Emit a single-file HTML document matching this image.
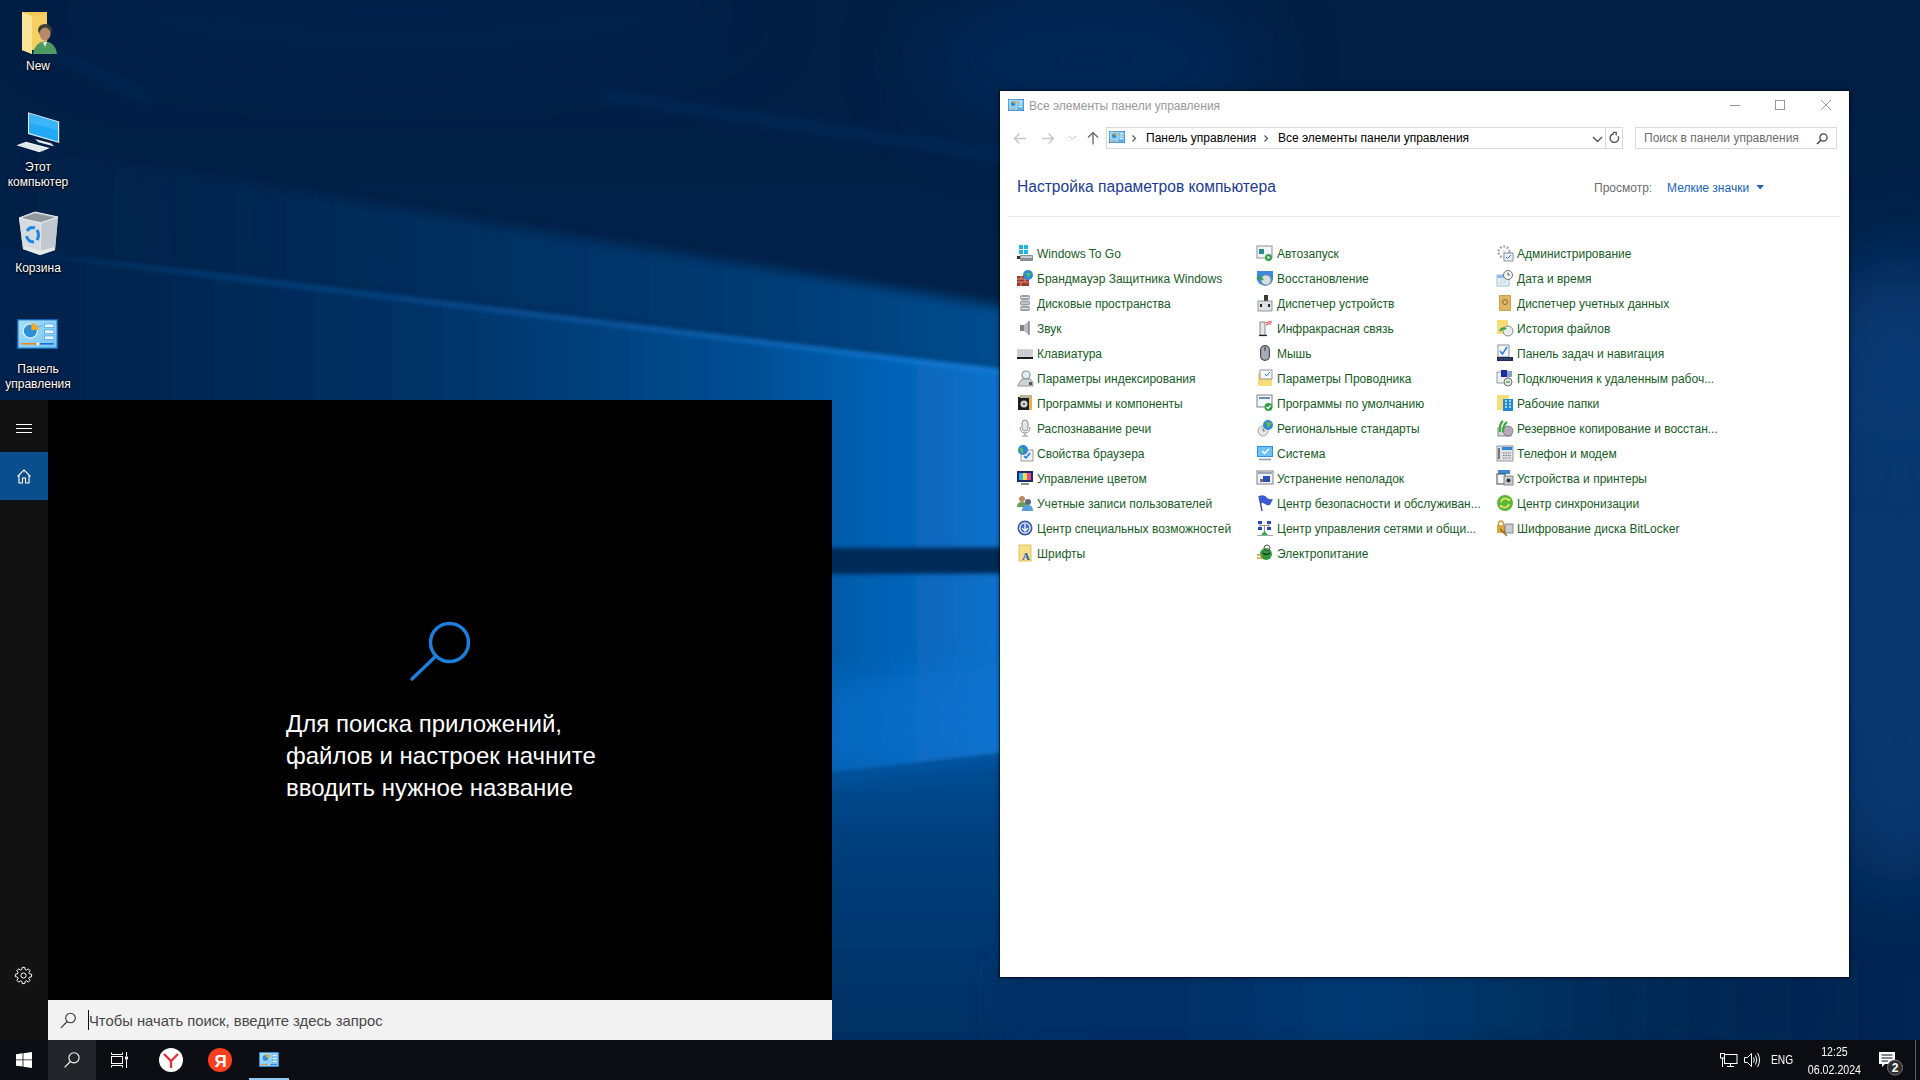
<!DOCTYPE html>
<html><head><meta charset="utf-8"><style>
*{margin:0;padding:0;box-sizing:border-box}
html,body{width:1920px;height:1080px;overflow:hidden;background:#011d40;font-family:"Liberation Sans",sans-serif}
.a{position:absolute}
svg.a{overflow:visible}
#wall{position:absolute;left:0;top:0;width:1920px;height:1040px}
.dl{position:absolute;width:76px;left:0;text-align:center;color:#fff;font-size:12px;line-height:15px;text-shadow:0 0 2px #000,0 1px 2px #000}
#sp{position:absolute;left:0;top:400px;width:832px;height:640px;background:#000;overflow:hidden}
#side{position:absolute;left:0;top:0;width:48px;height:640px;background:#121212}
#taskbar{position:absolute;left:0;top:1040px;width:1920px;height:40px;background:#0b0d12}
#win{position:absolute;left:1000px;top:91px;width:849px;height:886px;background:#fff;box-shadow:0 0 0 1px rgba(0,10,30,.55),0 0 4px 1px rgba(0,0,0,.45)}
.t{position:absolute;white-space:nowrap}
.it{position:absolute;font-size:12px;color:#175c26;white-space:nowrap;line-height:16px}
</style></head><body>
<svg width="0" height="0" style="position:absolute"><defs>
<linearGradient id="cpg" x1="0" y1="0" x2="1" y2="1"><stop offset="0" stop-color="#b8e8ff" stop-opacity=".6"/><stop offset="1" stop-color="#5cb8f0" stop-opacity=".5"/></linearGradient>
</defs></svg>
<svg id="wall" width="1920" height="1040" viewBox="0 0 1920 1040">
 <defs>
  <filter id="b2" x="-20%" y="-20%" width="140%" height="140%"><feGaussianBlur stdDeviation="2"/></filter>
  <filter id="b6" x="-20%" y="-20%" width="140%" height="140%"><feGaussianBlur stdDeviation="6"/></filter>
  <filter id="b15" x="-20%" y="-20%" width="140%" height="140%"><feGaussianBlur stdDeviation="15"/></filter>
  <filter id="b40" x="-50%" y="-50%" width="200%" height="200%"><feGaussianBlur stdDeviation="40"/></filter>
  <linearGradient id="g0" x1="0" y1="0" x2="0" y2="1">
   <stop offset="0" stop-color="#011e43"/><stop offset="0.4" stop-color="#01234b"/><stop offset="1" stop-color="#012654"/>
  </linearGradient>
  <linearGradient id="gA" gradientUnits="userSpaceOnUse" x1="0" y1="0" x2="1000" y2="0">
   <stop offset="0" stop-color="#022550" stop-opacity="0"/><stop offset="0.35" stop-color="#022c5a" stop-opacity="0.9"/><stop offset="0.7" stop-color="#03386f"/><stop offset="1" stop-color="#064c8e"/>
  </linearGradient>
  <linearGradient id="gB" gradientUnits="userSpaceOnUse" x1="0" y1="0" x2="1000" y2="0">
   <stop offset="0" stop-color="#01234d"/><stop offset="0.15" stop-color="#022650"/><stop offset="0.4" stop-color="#033063"/><stop offset="0.6" stop-color="#03417d"/><stop offset="0.75" stop-color="#044e94"/><stop offset="0.9" stop-color="#0664b8"/><stop offset="1" stop-color="#0a72cc"/>
  </linearGradient>
  <linearGradient id="gE" gradientUnits="userSpaceOnUse" x1="0" y1="0" x2="1000" y2="0">
   <stop offset="0" stop-color="#1580e0" stop-opacity="0"/><stop offset="0.2" stop-color="#1580e0" stop-opacity="0.2"/><stop offset="0.6" stop-color="#1580e0" stop-opacity="0.35"/><stop offset="1" stop-color="#1a88e8" stop-opacity="0.6"/>
  </linearGradient>
  <linearGradient id="gD" x1="0" y1="0" x2="1" y2="0">
   <stop offset="0" stop-color="#032f66"/><stop offset="0.2" stop-color="#032f66"/><stop offset="0.4" stop-color="#043a74"/><stop offset="0.6" stop-color="#03305f"/><stop offset="1" stop-color="#022248" stop-opacity="0"/>
  </linearGradient>
  <linearGradient id="gC" x1="0" y1="0" x2="0" y2="1">
   <stop offset="0" stop-color="#004f98"/><stop offset="0.3" stop-color="#003f7c"/><stop offset="1" stop-color="#022a5a"/>
  </linearGradient>
 </defs>
 <rect width="1920" height="1040" fill="url(#g0)"/>
 <ellipse cx="1090" cy="60" rx="170" ry="70" fill="#03306a" opacity="0.5" filter="url(#b40)"/>
 <ellipse cx="400" cy="10" rx="350" ry="60" fill="#02285a" opacity="0.35" filter="url(#b40)"/>
 <ellipse cx="1900" cy="570" rx="110" ry="320" fill="#0a4585" opacity="0.6" filter="url(#b40)"/>
 <ellipse cx="1900" cy="360" rx="90" ry="80" fill="#0a4585" opacity="0.3" filter="url(#b40)"/>
 <polygon points="600,90 1010,152 1010,162 600,100" fill="#033a74" opacity="0.35" filter="url(#b6)"/>
 <polygon points="50,45 150,95 150,105 50,55" fill="#033a74" opacity="0.3" filter="url(#b6)"/>
 <polygon points="-100,128 1100,322 1100,385 -100,233" fill="url(#gA)" filter="url(#b6)"/>
 <polygon points="-100,885 1100,742 1100,1100 -100,1100" fill="url(#gC)" filter="url(#b2)"/>
 <rect x="1000" y="960" width="900" height="90" fill="url(#gD)" filter="url(#b15)"/>
 <polygon points="-100,236 1100,382 1100,742 -100,885" fill="url(#gB)" filter="url(#b2)"/>
 <polygon points="-100,234 1100,380 1100,386 -100,240" fill="url(#gE)" filter="url(#b2)"/>
 <polygon points="600,549 1100,547 1100,573 600,575" fill="#002b58" filter="url(#b2)"/>
 <polygon points="700,690 1100,660 1100,742 700,790" fill="#0a76d6" opacity="0.45" filter="url(#b15)"/>
</svg>
<svg class="a" style="left:20px;top:10px" width="40" height="46" viewBox="0 0 40 46">
 <path d="M2 2 L27 2 L27 40 L12 40 L12 44 L2 40 Z" fill="#f3c94f"/>
 <path d="M2 2 L12 6 L12 44 L2 40 Z" fill="#fbe39a"/>
 <path d="M12 6 L27 2 L27 40 L12 40 Z" fill="#f5cf62"/>
 <ellipse cx="25" cy="20" rx="7" ry="6" fill="#3d3d3a"/>
 <ellipse cx="25" cy="24" rx="5.5" ry="6.5" fill="#b9896a"/>
 <path d="M13 44 Q14 33 25 31 Q36 33 37 44 Z" fill="#4f9a63"/>
 <path d="M23 32 L25 37 L27 32 Z" fill="#e8f0ea"/>
</svg>
<div class="dl" style="top:59px">New</div>
<svg class="a" style="left:14px;top:110px" width="48" height="46" viewBox="0 0 48 46">
 <path d="M14 2.2 L45.2 11.5 L45.2 33 L14 24 Z" fill="#dfeaf2"/>
 <path d="M15 3.6 L44 12.3 L44 31.4 L15 22.9 Z" fill="#22aaf6"/>
 <path d="M15 3.6 L44 12.3 L44 20 L15 13 Z" fill="#4cbcf6" opacity=".6"/>
 <path d="M21 29 L37 33.3 L40.5 36.5 L24.5 32.2 Z" fill="#e8eef2"/>
 <path d="M2.4 35.2 L12 31.8 L35.8 38 L25.4 42.2 Z" fill="#eef2f5"/>
 <path d="M6 35 L30 41 M9 33.5 L33 39.5" stroke="#b9c6cf" stroke-width=".5"/>
</svg>
<div class="dl" style="top:160px">Этот<br>компьютер</div>
<svg class="a" style="left:18px;top:210px" width="42" height="46" viewBox="0 0 42 46">
 <path d="M1 8 L17 2 L40 7 L37 40 L22 45 L5 39 Z" fill="#b9c0c6"/>
 <path d="M1 8 L23 13 L22 45 L5 39 Z" fill="#d6dbdf"/>
 <path d="M23 13 L40 7 L37 40 L22 45 Z" fill="#c2c8cd"/>
 <path d="M3 8.3 L17 3.5 L37.5 7.6 L23 12 Z" fill="#8f979d"/>
 <path d="M1 8 L17 2 L40 7 L23 13 Z" fill="none" stroke="#eef1f3" stroke-width="1"/>
 <path d="M23 13 L22 45" stroke="#eef1f3" stroke-width=".8"/>
 <path d="M7 36 L22 41 L36 37 L37 40 L22 45 L5 39 Z" fill="#e6e9ec"/>
 <path d="M9 21 Q12 16 17 18" stroke="#1a86e6" stroke-width="3" fill="none"/>
 <path d="M19 20 Q22 25 19 30" stroke="#1a86e6" stroke-width="3" fill="none"/>
 <path d="M16 32 Q10 32 8.5 26" stroke="#1a86e6" stroke-width="3" fill="none"/>
</svg>
<div class="dl" style="top:261px">Корзина</div>
<svg class="a" style="left:17px;top:319px" width="41" height="30" viewBox="0 0 40 30" preserveAspectRatio="none">
 <rect x="0" y="0" width="40" height="30" fill="#0b64b4"/>
 <rect x="1.5" y="1.5" width="37" height="27" fill="#8fd3f7"/>
 <rect x="1.5" y="1.5" width="37" height="27" fill="url(#cpg)"/>
 <circle cx="13" cy="12" r="7" fill="#2f8fd8" stroke="#e8f7ff" stroke-width="1.2"/>
 <path d="M14 4 L14 11 L21 11 A7 7 0 0 0 14 4 Z" fill="#f5a623"/>
 <rect x="27" y="5" width="9" height="3.5" fill="#e8f7ff" stroke="#3b8fd0" stroke-width=".6"/>
 <rect x="27" y="11" width="9" height="3.5" fill="#e8f7ff" stroke="#3b8fd0" stroke-width=".6"/>
 <rect x="27" y="17" width="9" height="3.5" fill="#e8f7ff" stroke="#3b8fd0" stroke-width=".6"/>
 <path d="M20 8 L25 6.5" stroke="#3b8fd0" stroke-width=".6"/>
 <rect x="4" y="24" width="16" height="1.6" fill="#f08a1c"/>
 <rect x="21" y="24" width="15" height="1.6" fill="#1e6fd0"/>
 <circle cx="20.5" cy="24.8" r="1.6" fill="#e8f7ff"/>
</svg>
<div class="dl" style="top:362px">Панель<br>управления</div>
<div id="sp"><div id="side">
<div class="a" style="left:16px;top:24px;width:16px;height:1px;background:#fff"></div>
<div class="a" style="left:16px;top:28px;width:16px;height:1px;background:#fff"></div>
<div class="a" style="left:16px;top:32px;width:16px;height:1px;background:#fff"></div>
<div class="a" style="left:0;top:52px;width:48px;height:48px;background:#0a4f8d"></div>
<svg class="a" style="left:16px;top:68px" width="16" height="16" viewBox="0 0 16 16">
 <path d="M1.5 8.5 L8 2 L14.5 8.5 M3 7 L3 15 L6.5 15 L6.5 10 L9.5 10 L9.5 15 L13 15 L13 7" stroke="#fff" stroke-width="1.1" fill="none" stroke-linejoin="round"/>
</svg>
<svg class="a" style="left:15px;top:567px" width="17" height="17" viewBox="0 0 17 17">
 <path d="M14.49 6.91 L16.60 7.19 L16.60 9.81 L14.49 10.09 L13.86 11.61 L15.15 13.30 L13.30 15.15 L11.61 13.86 L10.09 14.49 L9.81 16.60 L7.19 16.60 L6.91 14.49 L5.39 13.86 L3.70 15.15 L1.85 13.30 L3.14 11.61 L2.51 10.09 L0.40 9.81 L0.40 7.19 L2.51 6.91 L3.14 5.39 L1.85 3.70 L3.70 1.85 L5.39 3.14 L6.91 2.51 L7.19 0.40 L9.81 0.40 L10.09 2.51 L11.61 3.14 L13.30 1.85 L15.15 3.70 L13.86 5.39 Z" stroke="#fff" stroke-width="1" fill="none" stroke-linejoin="round"/>
 <circle cx="8.5" cy="8.5" r="2.6" stroke="#fff" stroke-width="1" fill="none"/>
</svg>
</div>
<svg class="a" style="left:405px;top:218px" width="70" height="70" viewBox="0 0 70 70">
 <circle cx="44.5" cy="24.5" r="19" stroke="#1b7fdb" stroke-width="3.4" fill="none"/>
 <path d="M31 38 L7 61" stroke="#1b7fdb" stroke-width="3.4" stroke-linecap="round"/>
</svg>
<div class="t" style="left:286px;top:308px;font-size:24px;line-height:32px;color:#fff">Для поиска приложений,<br>файлов и настроек начните<br>вводить нужное название</div>
<div class="a" style="left:48px;top:600px;width:784px;height:40px;background:#f2f2f2"></div>
<svg class="a" style="left:60px;top:612px" width="17" height="17" viewBox="0 0 17 17">
 <circle cx="10.5" cy="6" r="4.8" stroke="#333" stroke-width="1.1" fill="none"/>
 <path d="M7.2 9.5 L1 15.8" stroke="#333" stroke-width="1.1"/>
</svg>
<div class="a" style="left:88px;top:610px;width:1px;height:20px;background:#111"></div>
<div class="t" style="left:89px;top:612px;font-size:14.8px;line-height:18px;color:#474747">Чтобы начать поиск, введите здесь запрос</div>
</div>
<div id="win">
<svg class="a" style="left:8px;top:8px" width="16" height="12" viewBox="0 0 40 30" preserveAspectRatio="none">
 <rect x="0" y="0" width="40" height="30" fill="#0b64b4"/>
 <rect x="1.5" y="1.5" width="37" height="27" fill="#8fd3f7"/>
 <rect x="1.5" y="1.5" width="37" height="27" fill="url(#cpg)"/>
 <circle cx="13" cy="12" r="7" fill="#2f8fd8" stroke="#e8f7ff" stroke-width="1.2"/>
 <path d="M14 4 L14 11 L21 11 A7 7 0 0 0 14 4 Z" fill="#f5a623"/>
 <rect x="27" y="5" width="9" height="3.5" fill="#e8f7ff" stroke="#3b8fd0" stroke-width=".6"/>
 <rect x="27" y="11" width="9" height="3.5" fill="#e8f7ff" stroke="#3b8fd0" stroke-width=".6"/>
 <rect x="27" y="17" width="9" height="3.5" fill="#e8f7ff" stroke="#3b8fd0" stroke-width=".6"/>
 <path d="M20 8 L25 6.5" stroke="#3b8fd0" stroke-width=".6"/>
 <rect x="4" y="24" width="16" height="1.6" fill="#f08a1c"/>
 <rect x="21" y="24" width="15" height="1.6" fill="#1e6fd0"/>
 <circle cx="20.5" cy="24.8" r="1.6" fill="#e8f7ff"/>
</svg>
<div class="t" style="left:29px;top:7px;font-size:12px;line-height:16px;color:#999">Все элементы панели управления</div>
<div class="a" style="left:730px;top:14px;width:10px;height:1px;background:#999"></div>
<div class="a" style="left:775px;top:9px;width:10px;height:10px;border:1px solid #999"></div>
<svg class="a" style="left:820px;top:8px" width="12" height="12" viewBox="0 0 12 12"><path d="M1 1 L11 11 M11 1 L1 11" stroke="#999" stroke-width="1"/></svg>
<svg class="a" style="left:13px;top:41px" width="14" height="13" viewBox="0 0 14 13"><path d="M13 6.5 H1.5 M6.5 1.5 L1.5 6.5 L6.5 11.5" stroke="#c6c6c6" stroke-width="1.3" fill="none"/></svg>
<svg class="a" style="left:41px;top:41px" width="14" height="13" viewBox="0 0 14 13"><path d="M1 6.5 H12.5 M7.5 1.5 L12.5 6.5 L7.5 11.5" stroke="#c6c6c6" stroke-width="1.3" fill="none"/></svg>
<svg class="a" style="left:68px;top:44px" width="9" height="6" viewBox="0 0 9 6"><path d="M1 1 L4.5 4.5 L8 1" stroke="#c6c6c6" stroke-width="1" fill="none"/></svg>
<svg class="a" style="left:87px;top:40px" width="12" height="14" viewBox="0 0 12 14"><path d="M6 13.5 V1.5 M1 6.5 L6 1.5 L11 6.5" stroke="#6d6d6d" stroke-width="1.4" fill="none"/></svg>
<div class="a" style="left:106px;top:36px;width:517px;height:22px;border:1px solid #d9d9d9"></div>
<div class="a" style="left:605px;top:37px;width:1px;height:20px;background:#d9d9d9"></div>
<svg class="a" style="left:109px;top:40px" width="16" height="12" viewBox="0 0 40 30" preserveAspectRatio="none">
 <rect x="0" y="0" width="40" height="30" fill="#0b64b4"/>
 <rect x="1.5" y="1.5" width="37" height="27" fill="#8fd3f7"/>
 <rect x="1.5" y="1.5" width="37" height="27" fill="url(#cpg)"/>
 <circle cx="13" cy="12" r="7" fill="#2f8fd8" stroke="#e8f7ff" stroke-width="1.2"/>
 <path d="M14 4 L14 11 L21 11 A7 7 0 0 0 14 4 Z" fill="#f5a623"/>
 <rect x="27" y="5" width="9" height="3.5" fill="#e8f7ff" stroke="#3b8fd0" stroke-width=".6"/>
 <rect x="27" y="11" width="9" height="3.5" fill="#e8f7ff" stroke="#3b8fd0" stroke-width=".6"/>
 <rect x="27" y="17" width="9" height="3.5" fill="#e8f7ff" stroke="#3b8fd0" stroke-width=".6"/>
 <path d="M20 8 L25 6.5" stroke="#3b8fd0" stroke-width=".6"/>
 <rect x="4" y="24" width="16" height="1.6" fill="#f08a1c"/>
 <rect x="21" y="24" width="15" height="1.6" fill="#1e6fd0"/>
 <circle cx="20.5" cy="24.8" r="1.6" fill="#e8f7ff"/>
</svg>
<svg class="a" style="left:131px;top:44px" width="6" height="7" viewBox="0 0 6 7"><path d="M1.5 0.5 L4.5 3.5 L1.5 6.5" stroke="#555" stroke-width="1.2" fill="none"/></svg>
<div class="t" style="left:146px;top:38px;font-size:12px;line-height:18px;color:#000">Панель управления</div>
<svg class="a" style="left:263px;top:44px" width="6" height="7" viewBox="0 0 6 7"><path d="M1.5 0.5 L4.5 3.5 L1.5 6.5" stroke="#555" stroke-width="1.2" fill="none"/></svg>
<div class="t" style="left:278px;top:38px;font-size:12px;line-height:18px;color:#000">Все элементы панели управления</div>
<svg class="a" style="left:592px;top:45px" width="11" height="7" viewBox="0 0 11 7"><path d="M1 1 L5.5 5.5 L10 1" stroke="#555" stroke-width="1.4" fill="none"/></svg>
<svg class="a" style="left:609px;top:41px" width="12" height="12" viewBox="0 0 12 12"><path d="M9.2 4.2 A4.3 4.3 0 1 1 5 1.8" stroke="#555" stroke-width="1.4" fill="none"/><path d="M4 0.3 H7.2 V3.5" stroke="#555" stroke-width="1.3" fill="none"/></svg>
<div class="a" style="left:635px;top:36px;width:202px;height:22px;border:1px solid #d9d9d9"></div>
<div class="t" style="left:644px;top:38px;font-size:12px;line-height:18px;color:#6d6d6d">Поиск в панели управления</div>
<svg class="a" style="left:816px;top:42px" width="12" height="12" viewBox="0 0 12 12"><circle cx="7.5" cy="4.5" r="3.6" stroke="#444" stroke-width="1.3" fill="none"/><path d="M5 7 L1 11" stroke="#444" stroke-width="1.6"/></svg>
<div class="t" style="left:17px;top:86px;font-size:15.6px;line-height:20px;color:#1d3a92">Настройка параметров компьютера</div>
<div class="t" style="left:594px;top:89px;font-size:12px;line-height:16px;color:#6d6d6d">Просмотр:</div>
<div class="t" style="left:667px;top:89px;font-size:12px;line-height:16px;color:#1a64b8">Мелкие значки</div>
<svg class="a" style="left:756px;top:94px" width="9" height="5" viewBox="0 0 9 5"><path d="M0.5 0 L8 0 L4.25 4.5 Z" fill="#1a64b8"/></svg>
<div class="a" style="left:8px;top:125px;width:832px;height:1px;background:#e3ecf5"></div>
<svg class="a" style="left:17px;top:154px" width="16" height="16" viewBox="0 0 16 16"><rect x="2" y="0" width="4" height="4" fill="#1fb4e8"/><rect x="7" y="0" width="4" height="4" fill="#1fb4e8"/><rect x="2" y="5" width="4" height="4" fill="#1fb4e8"/><rect x="7" y="5" width="4" height="4" fill="#1fb4e8"/><rect x="3" y="10" width="13" height="6" rx="1" fill="#8a8f94"/><rect x="4" y="11" width="11" height="2" fill="#c9cdd0"/><rect x="0" y="11" width="3" height="3" fill="#333"/></svg>
<div class="it" style="left:37px;top:155px">Windows To Go</div>
<svg class="a" style="left:17px;top:179px" width="16" height="16" viewBox="0 0 16 16"><rect x="0" y="6" width="12" height="10" fill="#a0392a"/><path d="M0 9 H12 M0 12 H12 M4 6 V9 M8 9 V12 M4 12 V16" stroke="#e6a89a" stroke-width=".8"/><circle cx="11" cy="5" r="5" fill="#2b8ad6"/><path d="M8 3 Q11 5 10 8 Q13 6 14 3" fill="#5cb85c"/></svg>
<div class="it" style="left:37px;top:180px">Брандмауэр Защитника Windows</div>
<svg class="a" style="left:17px;top:204px" width="16" height="16" viewBox="0 0 16 16"><rect x="3" y="0" width="10" height="5" rx="2" fill="#9aa0a6"/><rect x="3" y="5.5" width="10" height="5" rx="2" fill="#9aa0a6"/><rect x="3" y="11" width="10" height="5" rx="2" fill="#9aa0a6"/><path d="M4 2.5 H12 M4 8 H12 M4 13.5 H12" stroke="#e8eaec" stroke-width="1"/></svg>
<div class="it" style="left:37px;top:205px">Дисковые пространства</div>
<svg class="a" style="left:17px;top:229px" width="16" height="16" viewBox="0 0 16 16"><rect x="3" y="5" width="4" height="6" fill="#7d8287"/><path d="M7 5 L12 1 L12 15 L7 11 Z" fill="#b8bcc0"/><path d="M12 1 L12 15" stroke="#55595d" stroke-width="1"/></svg>
<div class="it" style="left:37px;top:230px">Звук</div>
<svg class="a" style="left:17px;top:254px" width="16" height="16" viewBox="0 0 16 16"><rect x="0" y="4" width="16" height="10" fill="#d3d6d9"/><rect x="0" y="12" width="16" height="2" fill="#1b1b1b"/><path d="M1 6 H15 M1 8 H15 M1 10 H15" stroke="#9a9ea2" stroke-width=".6" stroke-dasharray="1 1"/></svg>
<div class="it" style="left:37px;top:255px">Клавиатура</div>
<svg class="a" style="left:17px;top:279px" width="16" height="16" viewBox="0 0 16 16"><circle cx="9" cy="5" r="4" fill="#dfeff9" stroke="#8d9297" stroke-width="1.2"/><path d="M1 15 L5 9 L13 9 L16 12 L16 16 L1 16 Z" fill="#cfd3d6" stroke="#7d8287" stroke-width=".8"/><rect x="12" y="12" width="3" height="3" fill="#555"/></svg>
<div class="it" style="left:37px;top:280px">Параметры индексирования</div>
<svg class="a" style="left:17px;top:304px" width="16" height="16" viewBox="0 0 16 16"><rect x="1" y="2" width="14" height="13" fill="#1d1d1d"/><rect x="3" y="0" width="12" height="3" fill="#b9b39a"/><circle cx="7" cy="9" r="3.5" fill="#cfd2d4"/><circle cx="7" cy="9" r="1" fill="#333"/><rect x="12" y="3" width="3" height="12" fill="#e8b04a"/></svg>
<div class="it" style="left:37px;top:305px">Программы и компоненты</div>
<svg class="a" style="left:17px;top:329px" width="16" height="16" viewBox="0 0 16 16"><rect x="5" y="0" width="6" height="11" rx="3" fill="#e2e4e6" stroke="#8c9196" stroke-width="1"/><path d="M3 7 Q3 13 8 13 Q13 13 13 7" stroke="#8c9196" fill="none"/><path d="M8 13 V16 M5 16 H11" stroke="#8c9196"/></svg>
<div class="it" style="left:37px;top:330px">Распознавание речи</div>
<svg class="a" style="left:17px;top:354px" width="16" height="16" viewBox="0 0 16 16"><rect x="4" y="5" width="12" height="11" fill="#eef3f7" stroke="#7d8287" stroke-width=".8"/><circle cx="6" cy="5" r="5" fill="#2f88d4"/><path d="M3 3 Q6 5 5 8" stroke="#6cc04a" stroke-width="2" fill="none"/><path d="M7 11 L9 13 L13 8" stroke="#1c6fd1" stroke-width="1.4" fill="none"/></svg>
<div class="it" style="left:37px;top:355px">Свойства браузера</div>
<svg class="a" style="left:17px;top:379px" width="16" height="16" viewBox="0 0 16 16"><rect x="0" y="1" width="16" height="11" fill="#1d2a6a"/><rect x="2" y="3" width="12" height="7" fill="#e84a8a"/><rect x="2" y="3" width="4" height="7" fill="#3ab0f0"/><rect x="6" y="3" width="4" height="7" fill="#f4e04a"/><path d="M4 14 H12" stroke="#8a8f94" stroke-width="2"/></svg>
<div class="it" style="left:37px;top:380px">Управление цветом</div>
<svg class="a" style="left:17px;top:404px" width="16" height="16" viewBox="0 0 16 16"><circle cx="5" cy="4" r="3" fill="#c08a60"/><path d="M0 12 Q0 7 5 7 Q10 7 10 12 Z" fill="#6a9a5a"/><circle cx="11" cy="7" r="3" fill="#5a6a7a"/><path d="M5 16 Q5 10 11 10 Q16 10 16 16 Z" fill="#5aa0d8"/></svg>
<div class="it" style="left:37px;top:405px">Учетные записи пользователей</div>
<svg class="a" style="left:17px;top:429px" width="16" height="16" viewBox="0 0 16 16"><circle cx="8" cy="8" r="7.5" fill="#3a56a8"/><circle cx="8" cy="8" r="5.8" fill="#fff"/><circle cx="8" cy="8" r="4.5" fill="#3a6ad0"/><path d="M5 8 L8 11 L11 8 M8 4 V11" stroke="#fff" stroke-width="1.3" fill="none"/></svg>
<div class="it" style="left:37px;top:430px">Центр специальных возможностей</div>
<svg class="a" style="left:17px;top:454px" width="16" height="16" viewBox="0 0 16 16"><rect x="2" y="0" width="12" height="16" fill="#f6e08a" stroke="#d8b84a" stroke-width=".8"/><text x="9" y="15" font-family="Liberation Serif" font-size="11" font-weight="bold" fill="#2060b0" text-anchor="middle">A</text></svg>
<div class="it" style="left:37px;top:455px">Шрифты</div>
<svg class="a" style="left:257px;top:154px" width="16" height="16" viewBox="0 0 16 16"><rect x="0" y="1" width="15" height="12" fill="#f4f6f7" stroke="#8a8f94" stroke-width="1"/><rect x="2" y="4" width="5" height="5" fill="#2a8a8a"/><circle cx="11.5" cy="12.5" r="3.5" fill="#2ea043"/><path d="M10.5 10.8 L13.3 12.5 L10.5 14.2 Z" fill="#fff"/></svg>
<div class="it" style="left:277px;top:155px">Автозапуск</div>
<svg class="a" style="left:257px;top:179px" width="16" height="16" viewBox="0 0 16 16"><path d="M0 1 H16 V9 Q16 14 8 16 Q0 14 0 9 Z" fill="#3a8ad8"/><circle cx="9" cy="10" r="5" fill="#d9dcdf" stroke="#8a8f94" stroke-width=".8"/><path d="M0 9 Q3 6 6 10" stroke="#2ea043" stroke-width="2" fill="none"/></svg>
<div class="it" style="left:277px;top:180px">Восстановление</div>
<svg class="a" style="left:257px;top:204px" width="16" height="16" viewBox="0 0 16 16"><rect x="7" y="0" width="4" height="6" fill="#3a3a3a"/><rect x="1" y="6" width="14" height="10" fill="#dfe2e4" stroke="#7d8287" stroke-width=".8"/><rect x="3" y="9" width="2" height="3" fill="#222"/><rect x="11" y="9" width="2" height="3" fill="#222"/></svg>
<div class="it" style="left:277px;top:205px">Диспетчер устройств</div>
<svg class="a" style="left:257px;top:229px" width="16" height="16" viewBox="0 0 16 16"><rect x="3" y="2" width="5" height="13" fill="#e4e6e8" stroke="#6d7277" stroke-width=".8"/><path d="M2 15.5 H10" stroke="#222" stroke-width="1.2"/><path d="M9 3 Q12 1 15 2 M9 5 Q12 3 14 4" stroke="#e03030" stroke-width="1" fill="none"/></svg>
<div class="it" style="left:277px;top:230px">Инфракрасная связь</div>
<svg class="a" style="left:257px;top:254px" width="16" height="16" viewBox="0 0 16 16"><rect x="3" y="0" width="10" height="16" rx="5" fill="#4a4f54"/><rect x="4.2" y="1.2" width="7.6" height="13.6" rx="3.8" fill="#a4adb5"/><path d="M8 2 V6" stroke="#333" stroke-width="1"/></svg>
<div class="it" style="left:277px;top:255px">Мышь</div>
<svg class="a" style="left:257px;top:279px" width="16" height="16" viewBox="0 0 16 16"><rect x="1" y="3" width="14" height="13" fill="#f6dd7a"/><rect x="3" y="0" width="12" height="9" fill="#f7f9fa" stroke="#7d8287" stroke-width=".8"/><path d="M8 4 L9.5 6 L13 2" stroke="#2a7ad8" stroke-width="1" fill="none"/></svg>
<div class="it" style="left:277px;top:280px">Параметры Проводника</div>
<svg class="a" style="left:257px;top:304px" width="16" height="16" viewBox="0 0 16 16"><rect x="0" y="0" width="15" height="12" fill="#f4f6f7" stroke="#7d8287" stroke-width="1"/><rect x="2" y="2" width="11" height="2" fill="#6a8ab0"/><circle cx="11.5" cy="12" r="4" fill="#2ea043"/><path d="M9.5 12 L11 13.5 L13.5 10.5" stroke="#fff" stroke-width="1.2" fill="none"/></svg>
<div class="it" style="left:277px;top:305px">Программы по умолчанию</div>
<svg class="a" style="left:257px;top:329px" width="16" height="16" viewBox="0 0 16 16"><circle cx="6" cy="11" r="5" fill="#e6e8ea" stroke="#8a8f94" stroke-width=".8"/><path d="M6 8 V11 H8" stroke="#555" fill="none" stroke-width=".8"/><circle cx="11" cy="5" r="5" fill="#2f88d4"/><path d="M8 2 Q11 4 10 8 Q13 6 15 3" fill="#6cc04a"/></svg>
<div class="it" style="left:277px;top:330px">Региональные стандарты</div>
<svg class="a" style="left:257px;top:354px" width="16" height="16" viewBox="0 0 16 16"><rect x="0" y="1" width="16" height="11" fill="#2f8fe0"/><rect x="1" y="2" width="14" height="9" fill="#6cc4f4"/><path d="M5 6 L7.5 8.5 L12 4" stroke="#fff" stroke-width="1.5" fill="none"/><path d="M2 14.5 H14" stroke="#8a9aaa" stroke-width="1.5"/></svg>
<div class="it" style="left:277px;top:355px">Система</div>
<svg class="a" style="left:257px;top:379px" width="16" height="16" viewBox="0 0 16 16"><rect x="0" y="1" width="16" height="13" fill="#f1f3f4" stroke="#7d8287" stroke-width="1"/><rect x="1" y="2" width="14" height="2" fill="#9aa8b8"/><rect x="6" y="6" width="7" height="6" fill="#2a50b8"/><rect x="3" y="9" width="3" height="3" fill="#6d7277"/></svg>
<div class="it" style="left:277px;top:380px">Устранение неполадок</div>
<svg class="a" style="left:257px;top:404px" width="16" height="16" viewBox="0 0 16 16"><path d="M2 1 L5 16" stroke="#3a4a8a" stroke-width="1.4"/><path d="M2 1 Q8 -1 10 3 Q13 5 16 4 L13 10 Q10 11 8 9 Q5 7 3.5 9 Z" fill="#3a5ad0"/></svg>
<div class="it" style="left:277px;top:405px">Центр безопасности и обслуживан...</div>
<svg class="a" style="left:257px;top:429px" width="16" height="16" viewBox="0 0 16 16"><rect x="1" y="1" width="4" height="3" fill="#2a4ab0"/><rect x="10" y="1" width="4" height="3" fill="#2a4ab0"/><rect x="1" y="7" width="4" height="3" fill="#2a4ab0"/><rect x="10" y="7" width="4" height="3" fill="#2a4ab0"/><path d="M3 4 V7 M12 4 V7 M3 5.5 H12 M7.5 5.5 V13" stroke="#777" stroke-width=".8"/><path d="M4 15 L7.5 11 L11 15 Z" fill="#3aa84a"/><path d="M0 15.5 H16" stroke="#9aa" stroke-width="1"/></svg>
<div class="it" style="left:277px;top:430px">Центр управления сетями и общи...</div>
<svg class="a" style="left:257px;top:454px" width="16" height="16" viewBox="0 0 16 16"><circle cx="9" cy="9" r="6" fill="#2e9a3e"/><path d="M0 13 H6 M0 10 H5" stroke="#d0a030" stroke-width="1.4"/><circle cx="10" cy="3" r="3" fill="none" stroke="#555" stroke-width="1"/><path d="M6 8 Q9 11 13 8" stroke="#222" stroke-width="1.2" fill="none"/></svg>
<div class="it" style="left:277px;top:455px">Электропитание</div>
<svg class="a" style="left:497px;top:154px" width="16" height="16" viewBox="0 0 16 16"><circle cx="7" cy="7" r="5.5" fill="none" stroke="#a8adb2" stroke-width="2.5" stroke-dasharray="2 1.5"/><circle cx="7" cy="7" r="2" fill="#e8eaec"/><rect x="7" y="8" width="9" height="8" fill="#eef2f6" stroke="#6d7a8a" stroke-width=".8"/><path d="M9 12 L10.5 13.5 L14 10" stroke="#2a6ad8" stroke-width="1" fill="none"/></svg>
<div class="it" style="left:517px;top:155px">Администрирование</div>
<svg class="a" style="left:497px;top:179px" width="16" height="16" viewBox="0 0 16 16"><rect x="0" y="5" width="12" height="11" fill="#eaf2f8" stroke="#8ab0d0" stroke-width=".8"/><rect x="0" y="5" width="12" height="3" fill="#8ac0e8"/><path d="M2 10 H10 M2 12.5 H10 M4 8 V15 M7 8 V15" stroke="#a8c8e0" stroke-width=".5"/><circle cx="11" cy="5" r="4.5" fill="#f4f6f7" stroke="#6d7277" stroke-width="1"/><path d="M11 2.5 V5 H13" stroke="#333" stroke-width=".8" fill="none"/></svg>
<div class="it" style="left:517px;top:180px">Дата и время</div>
<svg class="a" style="left:497px;top:204px" width="16" height="16" viewBox="0 0 16 16"><rect x="2" y="0" width="12" height="16" rx="1" fill="#c8a050"/><rect x="3" y="1" width="10" height="14" fill="#e0b860"/><circle cx="8" cy="7" r="2.5" fill="none" stroke="#8a6a30" stroke-width="1"/></svg>
<div class="it" style="left:517px;top:205px">Диспетчер учетных данных</div>
<svg class="a" style="left:497px;top:229px" width="16" height="16" viewBox="0 0 16 16"><rect x="0" y="0" width="11" height="14" fill="#f6dd7a"/><circle cx="11" cy="11" r="5" fill="#e8eaec" stroke="#6d7277" stroke-width=".8"/><path d="M3 11 Q5 7 9 9" stroke="#2ea043" stroke-width="2" fill="none"/></svg>
<div class="it" style="left:517px;top:230px">История файлов</div>
<svg class="a" style="left:497px;top:254px" width="16" height="16" viewBox="0 0 16 16"><rect x="1" y="0" width="11" height="12" fill="#f4f6f8" stroke="#6d7a8a" stroke-width=".8"/><path d="M3 6 L5.5 9 L10 2" stroke="#2a7ad8" stroke-width="1.4" fill="none"/><rect x="0" y="12" width="16" height="4" fill="#1d2a5a"/><path d="M2 14 H14" stroke="#8a9ab0" stroke-width=".6" stroke-dasharray="1.5 1"/></svg>
<div class="it" style="left:517px;top:255px">Панель задач и навигация</div>
<svg class="a" style="left:497px;top:279px" width="16" height="16" viewBox="0 0 16 16"><rect x="0" y="2" width="12" height="11" fill="#eef2f5" stroke="#7d8287" stroke-width=".8"/><rect x="4" y="0" width="6" height="7" fill="#1a2aa8"/><rect x="10" y="1" width="5" height="6" fill="#8aa0c0"/><circle cx="11" cy="12" r="4" fill="#e4e6e8" stroke="#555" stroke-width=".8"/><path d="M9 12 H13" stroke="#2ea043" stroke-width="1.2"/></svg>
<div class="it" style="left:517px;top:280px">Подключения к удаленным рабоч...</div>
<svg class="a" style="left:497px;top:304px" width="16" height="16" viewBox="0 0 16 16"><rect x="0" y="0" width="12" height="15" fill="#f6dd7a"/><rect x="6" y="4" width="10" height="12" fill="#1e8ad8"/><path d="M8 6 H10 M12 6 H14 M8 9 H10 M12 9 H14 M8 12 H10 M12 12 H14" stroke="#d8f0ff" stroke-width="1.3"/></svg>
<div class="it" style="left:517px;top:305px">Рабочие папки</div>
<svg class="a" style="left:497px;top:329px" width="16" height="16" viewBox="0 0 16 16"><rect x="1" y="8" width="13" height="8" fill="#d8dbde" stroke="#6d7277" stroke-width=".8"/><circle cx="11" cy="11" r="5" fill="#b8a8b8" stroke="#555" stroke-width=".6"/><path d="M3 12 Q2 4 6 1 M6 12 Q6 5 10 2" stroke="#3aaa3a" stroke-width="2.2" fill="none"/></svg>
<div class="it" style="left:517px;top:330px">Резервное копирование и восстан...</div>
<svg class="a" style="left:497px;top:354px" width="16" height="16" viewBox="0 0 16 16"><rect x="0" y="1" width="16" height="15" fill="#dfe3e6" stroke="#7d8287" stroke-width=".8"/><rect x="5" y="2" width="10" height="3" fill="#2a8ad8"/><path d="M2 3 V14" stroke="#555" stroke-width="1.5"/><path d="M6 8 H14 M6 10.5 H14 M6 13 H14" stroke="#6d7277" stroke-width="1" stroke-dasharray="1.5 1"/></svg>
<div class="it" style="left:517px;top:355px">Телефон и модем</div>
<svg class="a" style="left:497px;top:379px" width="16" height="16" viewBox="0 0 16 16"><rect x="1" y="0" width="12" height="4" fill="#3a8ad8"/><rect x="0" y="4" width="8" height="10" fill="#f4f6f7" stroke="#444" stroke-width="1"/><rect x="7" y="6" width="9" height="9" fill="#c8cccf" stroke="#6d7277" stroke-width=".8"/><circle cx="11.5" cy="10.5" r="2" fill="#333"/></svg>
<div class="it" style="left:517px;top:380px">Устройства и принтеры</div>
<svg class="a" style="left:497px;top:404px" width="16" height="16" viewBox="0 0 16 16"><circle cx="8" cy="8" r="8" fill="#5cb83c"/><path d="M4 7 Q5 3.5 8.5 3.5 Q11 3.5 12 5.5 M12 9 Q11 12.5 7.5 12.5 Q5 12.5 4 10.5" stroke="#f6e860" stroke-width="1.6" fill="none"/><path d="M10.5 5.5 L13 6 L13 3.5 Z M5.5 10.5 L3 10 L3 12.5 Z" fill="#f6e860"/></svg>
<div class="it" style="left:517px;top:405px">Центр синхронизации</div>
<svg class="a" style="left:497px;top:429px" width="16" height="16" viewBox="0 0 16 16"><rect x="0" y="5" width="8" height="8" fill="#d8a840"/><path d="M1.5 5 V3 Q4 -1 6.5 3 V5" stroke="#c09030" stroke-width="1.3" fill="none"/><rect x="8" y="4" width="8" height="9" fill="#c8cccf" stroke="#6d7277" stroke-width=".8"/><path d="M3 9 L10 16 M6 13 L8 11" stroke="#8a6a20" stroke-width="1.4"/></svg>
<div class="it" style="left:517px;top:430px">Шифрование диска BitLocker</div>
</div>
<div id="taskbar">
<div class="a" style="left:48px;top:0;width:48px;height:40px;background:#23252b"></div>
<svg class="a" style="left:16px;top:12px" width="16" height="16" viewBox="0 0 16 16">
 <path d="M0 2.2 L6.6 1.3 L6.6 7.5 L0 7.5 Z M7.4 1.2 L16 0 L16 7.5 L7.4 7.5 Z M0 8.3 L6.6 8.3 L6.6 14.6 L0 13.7 Z M7.4 8.3 L16 8.3 L16 16 L7.4 14.8 Z" fill="#fff"/>
</svg>
<svg class="a" style="left:64px;top:12px" width="16" height="16" viewBox="0 0 16 16">
 <circle cx="10" cy="5.8" r="5.1" stroke="#fff" stroke-width="1.1" fill="none"/>
 <path d="M6.4 9.5 L0.6 15.4" stroke="#fff" stroke-width="1.1"/>
</svg>
<svg class="a" style="left:111px;top:12px" width="17" height="16" viewBox="0 0 17 16">
 <path d="M0.5 0.5 L0.5 2.5 L11.5 2.5 L11.5 0.5 M0.5 15.5 L0.5 13.5 L11.5 13.5 L11.5 15.5" stroke="#fff" stroke-width="1" fill="none"/>
 <rect x="0.5" y="4.5" width="11" height="7" stroke="#fff" stroke-width="1" fill="none"/>
 <path d="M15.5 0 L15.5 4 M15.5 8 L15.5 16" stroke="#fff" stroke-width="1"/>
 <rect x="14" y="4.5" width="3" height="3" fill="#fff"/>
</svg>
<svg class="a" style="left:159px;top:8px" width="24" height="24" viewBox="0 0 24 24">
 <circle cx="12" cy="12" r="12" fill="#fff"/>
 <path d="M5 6 L12 13 L19 6 M12 13 L12 20" stroke="#e8303a" stroke-width="2.3" fill="none"/>
</svg>
<svg class="a" style="left:208px;top:8px" width="24" height="24" viewBox="0 0 24 24">
 <circle cx="12" cy="12" r="12" fill="#fc3f1d"/>
 <text x="12.5" y="19" font-family="Liberation Sans" font-weight="bold" font-size="17" fill="#fff" text-anchor="middle">Я</text>
</svg>
<svg class="a" style="left:259px;top:12px" width="20" height="15" viewBox="0 0 40 30" preserveAspectRatio="none">
 <rect x="0" y="0" width="40" height="30" fill="#0b64b4"/>
 <rect x="1.5" y="1.5" width="37" height="27" fill="#8fd3f7"/>
 <rect x="1.5" y="1.5" width="37" height="27" fill="url(#cpg)"/>
 <circle cx="13" cy="12" r="7" fill="#2f8fd8" stroke="#e8f7ff" stroke-width="1.2"/>
 <path d="M14 4 L14 11 L21 11 A7 7 0 0 0 14 4 Z" fill="#f5a623"/>
 <rect x="27" y="5" width="9" height="3.5" fill="#e8f7ff" stroke="#3b8fd0" stroke-width=".6"/>
 <rect x="27" y="11" width="9" height="3.5" fill="#e8f7ff" stroke="#3b8fd0" stroke-width=".6"/>
 <rect x="27" y="17" width="9" height="3.5" fill="#e8f7ff" stroke="#3b8fd0" stroke-width=".6"/>
 <path d="M20 8 L25 6.5" stroke="#3b8fd0" stroke-width=".6"/>
 <rect x="4" y="24" width="16" height="1.6" fill="#f08a1c"/>
 <rect x="21" y="24" width="15" height="1.6" fill="#1e6fd0"/>
 <circle cx="20.5" cy="24.8" r="1.6" fill="#e8f7ff"/>
</svg>
<div class="a" style="left:249px;top:38px;width:40px;height:2px;background:#91c8f6"></div>
<svg class="a" style="left:1720px;top:13px" width="18" height="15" viewBox="0 0 18 15">
 <rect x="4.5" y="1.5" width="12.5" height="9" stroke="#fff" stroke-width="1" fill="none"/>
 <rect x="0.5" y="0.5" width="4" height="4.5" stroke="#fff" stroke-width="1" fill="#0c0e13"/>
 <path d="M2.5 5 L2.5 14 M7 13.5 L14 13.5 M10.5 10.5 L10.5 13.5" stroke="#fff" stroke-width="1"/>
</svg>
<svg class="a" style="left:1744px;top:12px" width="18" height="16" viewBox="0 0 18 16">
 <path d="M0.5 5.5 L3.5 5.5 L7.5 1.5 L7.5 14.5 L3.5 10.5 L0.5 10.5 Z" stroke="#fff" stroke-width="1" fill="none"/>
 <path d="M9.5 5.5 Q11 8 9.5 10.5 M11.5 3.5 Q14 8 11.5 12.5 M13.5 1 Q17.5 8 13.5 15" stroke="#fff" stroke-width="1" fill="none"/>
</svg>
<div class="t" style="left:1771px;top:12px;font-size:12px;line-height:16px;color:#fff;transform:scaleX(0.85);transform-origin:0 0">ENG</div>
<div class="t" style="left:1807px;top:3px;width:62px;text-align:center;font-size:12px;line-height:18px;color:#fff;transform:scaleX(0.885);transform-origin:0 0">12:25<br>06.02.2024</div>
<svg class="a" style="left:1878px;top:11px" width="26" height="26" viewBox="0 0 26 26">
 <path d="M1 1 L17 1 L17 13 L7 13 L4 16 L4 13 L1 13 Z" fill="#fff"/>
 <path d="M3.5 4 L14.5 4 M3.5 7 L14.5 7 M3.5 10 L10 10" stroke="#0c0e13" stroke-width="1"/>
 <circle cx="17" cy="16.5" r="7.5" fill="#2d2d2f" stroke="#777" stroke-width="1"/>
 <text x="17" y="21" font-family="Liberation Sans" font-weight="bold" font-size="12" fill="#fff" text-anchor="middle">2</text>
</svg>
<div class="a" style="left:1915px;top:0;width:1px;height:40px;background:#5a5c60"></div>
</div>
</body></html>
